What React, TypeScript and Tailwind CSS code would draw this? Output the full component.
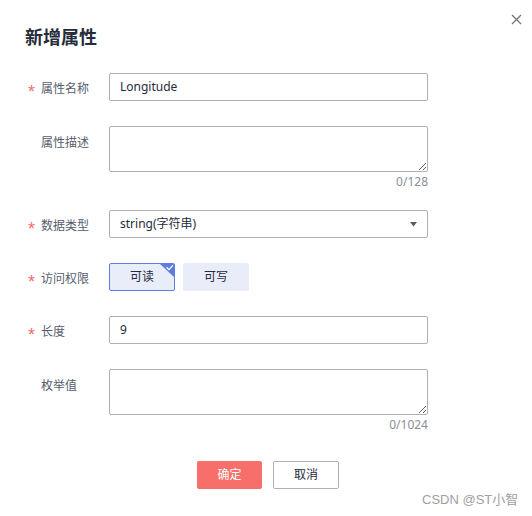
import React from "react";

function Label({ text, required, top = 0 }: { text: string; required?: boolean; top?: number }) {
  return (
    <div className="w-[81px] shrink-0 flex items-center h-[28px]" style={top ? { marginTop: top } : undefined}>
      <span className="w-[13px] shrink-0 text-[18px] leading-none text-[#f66f6a] font-['Liberation_Sans',sans-serif] translate-y-[5px]">
        {required ? "*" : ""}
      </span>
      <span className="text-[12px] text-[#575d6c] translate-y-[2px]">{text}</span>
    </div>
  );
}

export default function App() {
  return (
    <div className="relative w-[532px] h-[516px] bg-white overflow-hidden font-['Noto_Sans','Noto_Sans_CJK_SC',sans-serif]">
      <button className="absolute left-[511px] top-[14px] w-[11px] h-[11px]" aria-label="close">
        <svg width="11" height="11" viewBox="0 0 11 11">
          <path d="M1 1 L10 10 M10 1 L1 10" stroke="#71757f" strokeWidth="1.3" />
        </svg>
      </button>

      <div className="pl-[25px] pt-[25px]">
        <h2 className="text-[18px] leading-[24px] font-bold text-[#252b3a]">新增属性</h2>
      </div>

      <div className="pl-[28px] pt-[24px] flex flex-col">
        {/* 属性名称 */}
        <div className="flex">
          <Label text="属性名称" required />
          <div className="w-[319px] h-[28px] border border-[#adb0b8] rounded-[2px] flex items-center pl-[10px] text-[12px] text-[#252b3a]">
            Longitude
          </div>
        </div>

        {/* 属性描述 */}
        <div className="flex mt-[25px]">
          <Label text="属性描述" top={1} />
          <div className="flex flex-col">
            <textarea className="block w-[319px] h-[46px] border border-[#adb0b8] rounded-[2px] outline-none" />
            <div className="h-[20px] leading-[20px] text-right text-[12px] text-[#8a8e99]">0/128</div>
          </div>
        </div>

        {/* 数据类型 */}
        <div className="flex mt-[18px]">
          <Label text="数据类型" required />
          <div className="w-[319px] h-[28px] border border-[#adb0b8] rounded-[2px] flex items-center justify-between pl-[10px] pr-[10px] text-[12px] text-[#252b3a]">
            <span>string(字符串)</span>
            <svg width="7" height="5" viewBox="0 0 7 5">
              <path d="M0 0 H7 L3.5 4.5 Z" fill="#575d6c" />
            </svg>
          </div>
        </div>

        {/* 访问权限 */}
        <div className="flex mt-[25px]">
          <Label text="访问权限" required />
          <div className="flex gap-[8px]">
            <div className="relative w-[66px] h-[28px] border border-[#5e7ce0] bg-[#e9edfa] rounded-[2px] flex items-center justify-center text-[12px] text-[#252b3a] overflow-hidden">
              可读
              <svg className="absolute right-0 top-0" width="14" height="13" viewBox="0 0 14 13">
                <path d="M0 0 H14 V13 Z" fill="#5e7ce0" />
                <path d="M6.5 3.2 L9 5.6 L12.8 1.4" stroke="#ffffff" strokeWidth="1.3" fill="none" />
              </svg>
            </div>
            <div className="w-[66px] h-[28px] bg-[#e9edfa] rounded-[2px] flex items-center justify-center text-[12px] text-[#252b3a]">
              可写
            </div>
          </div>
        </div>

        {/* 长度 */}
        <div className="flex mt-[25px]">
          <Label text="长度" required />
          <div className="w-[319px] h-[28px] border border-[#adb0b8] rounded-[2px] flex items-center pl-[10px] text-[12px] text-[#252b3a]">
            9
          </div>
        </div>

        {/* 枚举值 */}
        <div className="flex mt-[25px]">
          <Label text="枚举值" top={1} />
          <div className="flex flex-col">
            <textarea className="block w-[319px] h-[46px] border border-[#adb0b8] rounded-[2px] outline-none" />
            <div className="h-[20px] leading-[20px] text-right text-[12px] text-[#8a8e99]">0/1024</div>
          </div>
        </div>

        {/* buttons */}
        <div className="flex gap-[11px] mt-[26px] pl-[169px]">
          <button className="w-[65px] h-[28px] bg-[#f66f6a] rounded-[2px] text-[12px] text-white">确定</button>
          <button className="w-[66px] h-[28px] border border-[#adb0b8] bg-white rounded-[2px] text-[12px] text-[#252b3a]">取消</button>
        </div>
      </div>

      <div className="absolute left-[422px] top-[491px] text-[13px] leading-[18px] text-[#a0a0a0] font-['Liberation_Sans','Noto_Sans_CJK_SC',sans-serif]">
        CSDN @ST小智
      </div>
    </div>
  );
}
